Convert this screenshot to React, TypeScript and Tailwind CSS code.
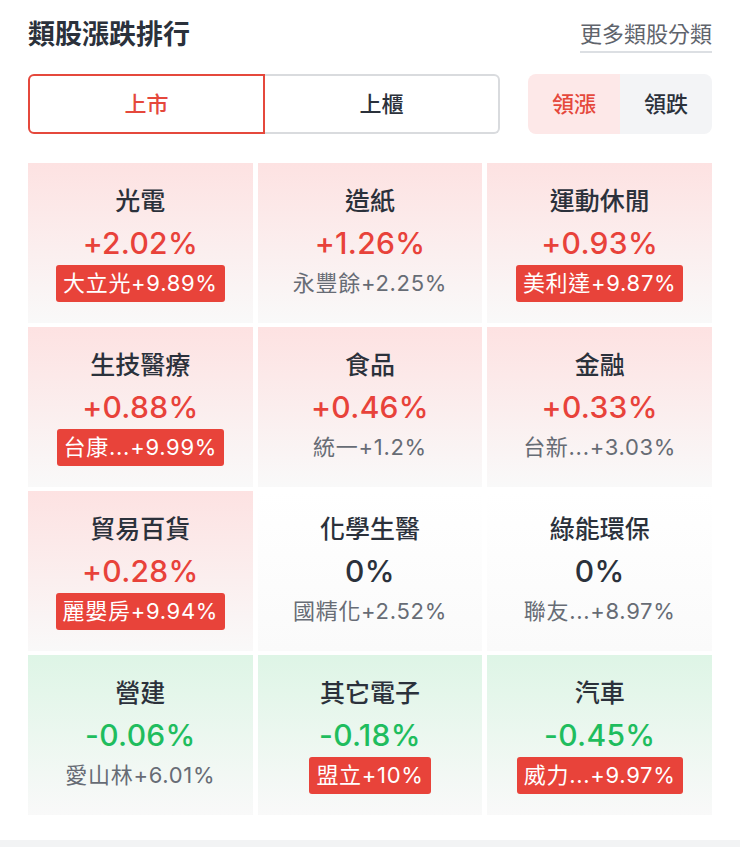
import React from "react"

type Sector = {
  name: string
  change: number
  top: string
  topChange: string
  limit: boolean
}

const sectors: Sector[] = [
  { name: "光電", change: 2.02, top: "大立光", topChange: "+9.89%", limit: true },
  { name: "造紙", change: 1.26, top: "永豐餘", topChange: "+2.25%", limit: false },
  { name: "運動休閒", change: 0.93, top: "美利達", topChange: "+9.87%", limit: true },
  { name: "生技醫療", change: 0.88, top: "台康...", topChange: "+9.99%", limit: true },
  { name: "食品", change: 0.46, top: "統一", topChange: "+1.2%", limit: false },
  { name: "金融", change: 0.33, top: "台新...", topChange: "+3.03%", limit: false },
  { name: "貿易百貨", change: 0.28, top: "麗嬰房", topChange: "+9.94%", limit: true },
  { name: "化學生醫", change: 0, top: "國精化", topChange: "+2.52%", limit: false },
  { name: "綠能環保", change: 0, top: "聯友...", topChange: "+8.97%", limit: false },
  { name: "營建", change: -0.06, top: "愛山林", topChange: "+6.01%", limit: false },
  { name: "其它電子", change: -0.18, top: "盟立", topChange: "+10%", limit: true },
  { name: "汽車", change: -0.45, top: "威力...", topChange: "+9.97%", limit: true },
]

function formatChange(v: number) {
  if (v === 0) return "0%"
  return (v > 0 ? "+" : "") + v.toFixed(2) + "%"
}

function SectorCell({ s }: { s: Sector }) {
  const bg =
    s.change > 0
      ? "bg-gradient-to-b from-[#fde2e2] to-[#f9f9f9]"
      : s.change < 0
        ? "bg-gradient-to-b from-[#def5e6] to-[#f9f9f9]"
        : "bg-gradient-to-b from-white to-[#fafafa]"
  const color =
    s.change > 0 ? "text-[#e8423a]" : s.change < 0 ? "text-[#1fbd5e]" : "text-[#2b313b]"

  return (
    <div className={`h-[160px] flex flex-col items-center pt-[23px] ${bg}`}>
      <div className="h-[30px] leading-[30px] text-[25px] font-medium text-[#2b313b]">{s.name}</div>
      <div className={`mt-[7px] h-[40px] leading-[40px] text-[30px] font-medium tracking-[0.3px] ${color}`}>
        {formatChange(s.change)}
      </div>
      {s.limit ? (
        <div className="mt-[2px] h-[37px] leading-[37px] px-[7px] rounded-[3px] bg-[#e8433a] text-white text-[22px] tracking-[0.7px]">
          {s.top}
          {s.topChange}
        </div>
      ) : (
        <div className="mt-[2px] h-[37px] leading-[37px] text-[22px] text-[#676c75] tracking-[0.7px]">
          {s.top}
          {s.topChange}
        </div>
      )}
    </div>
  )
}

export default function App() {
  return (
    <div
      className="w-[740px] h-[847px] bg-white flex flex-col overflow-hidden"
      style={{ fontFamily: '"Inter", "Noto Sans CJK TC", sans-serif' }}
    >
      <div className="px-[28px]">
        <div className="mt-[14px] h-[40px] flex items-center justify-between">
          <h1 className="text-[27px] font-bold text-[#2b313b] leading-none">類股漲跌排行</h1>
          <a className="text-[22px] text-[#5f646c] leading-[28px] border-b-2 border-[#dcdfe3] pb-[3px] mt-[4px]">
            更多類股分類
          </a>
        </div>

        <div className="mt-[20px] flex items-stretch h-[60px]">
          <div className="w-[472px] flex">
            <button className="flex-1 rounded-l-[6px] border-2 border-[#e5483c] text-[#e5483c] text-[22px] font-medium bg-white">
              上市
            </button>
            <button className="flex-1 rounded-r-[6px] border-2 border-l-0 border-[#d9dbde] text-[#2b313b] text-[22px] font-medium bg-white">
              上櫃
            </button>
          </div>
          <div className="ml-auto w-[184px] flex rounded-[8px] overflow-hidden">
            <button className="flex-1 bg-[#fde8e8] text-[#e5483c] text-[22px] font-medium">領漲</button>
            <button className="flex-1 bg-[#f3f4f6] text-[#2b313b] text-[22px] font-medium">領跌</button>
          </div>
        </div>

        <div className="mt-[29px] grid grid-cols-3 gap-x-[5px] gap-y-[4px]">
          {sectors.map((s) => (
            <SectorCell key={s.name} s={s} />
          ))}
        </div>
      </div>
      <div className="mt-auto h-[7px] bg-[#f2f3f4]" />
    </div>
  )
}
